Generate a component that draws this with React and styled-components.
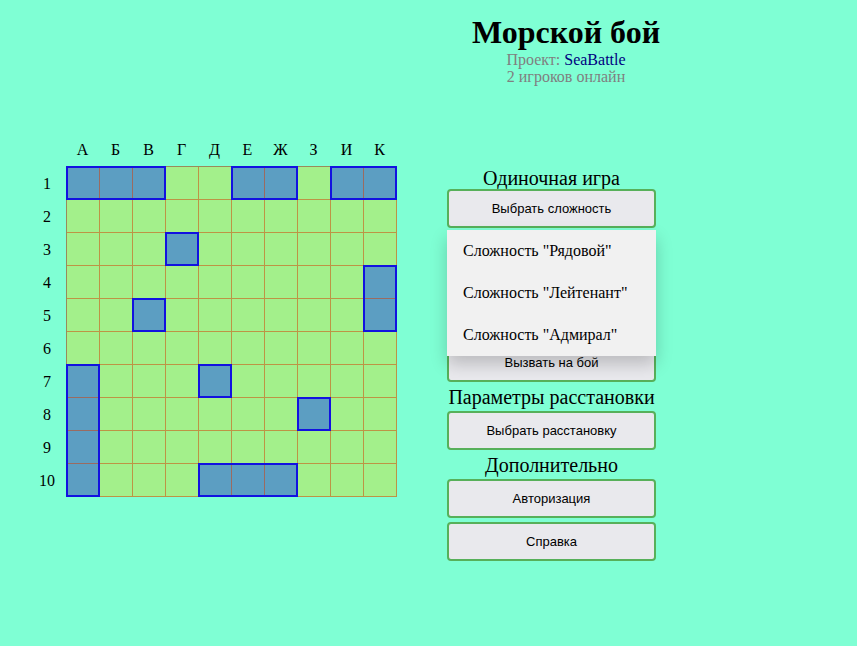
import React from 'react';
import styled, { createGlobalStyle } from 'styled-components';

const GlobalStyle = createGlobalStyle`
  body {
    margin: 0;
    background: #7fffd4;
    font-family: "Liberation Serif", "Times New Roman", serif;
  }
`;

const Page = styled.div`
  width: 857px;
  min-height: 646px;
`;

const Header = styled.header`
  padding: 14px 0 0 275px;
  text-align: center;
`;

const Title = styled.h1`
  margin: 0;
  font-size: 32px;
  line-height: 37px;
  font-weight: bold;
  color: #000;
`;

const SubLine = styled.p`
  margin: 0;
  font-size: 16px;
  line-height: 17px;
  color: #808080;
`;

const ProjectName = styled.span`
  color: #000080;
`;

const Main = styled.main`
  display: flex;
  align-items: flex-start;
  padding-left: 30px;
`;

const Board = styled.div`
  margin-top: 48px;
  display: flex;
  flex-direction: column;
`;

const ColLabels = styled.div`
  display: flex;
  margin-left: 36px;
`;

const Label = styled.div`
  width: 33px;
  height: 33px;
  display: flex;
  align-items: center;
  justify-content: center;
  font-size: 16px;
  color: #000;
`;

const BoardBody = styled.div`
  display: flex;
`;

const RowLabels = styled.div`
  width: 36px;
  display: flex;
  flex-direction: column;
  padding-top: 1px;
`;

const RowLabel = styled(Label)`
  width: 34px;
`;

const Field = styled.div`
  position: relative;
  display: grid;
  grid-template-columns: repeat(10, 33px);
  grid-template-rows: repeat(10, 33px);
  border-top: 1px solid rgba(170, 60, 10, 0.6);
  border-left: 1px solid rgba(170, 60, 10, 0.6);
`;

const Cell = styled.div`
  box-sizing: border-box;
  background: ${(p) => (p.ship ? '#5c9ec2' : '#a3f08b')};
  border-right: 1px solid rgba(215, 55, 0, 0.5);
  border-bottom: 1px solid rgba(215, 55, 0, 0.5);
`;

const Ship = styled.div`
  position: absolute;
  box-sizing: border-box;
  border: 2px solid #1212e0;
  pointer-events: none;
`;

const Panel = styled.aside`
  margin: 74px 0 0 50px;
  width: 209px;
  display: flex;
  flex-direction: column;
`;

const SectionTitle = styled.h3`
  margin: 0;
  padding: ${(p) => (p.first ? '8px 0 0' : '4px 0 3px')};
  font-size: 20px;
  line-height: 22px;
  font-weight: normal;
  text-align: center;
  color: #000;
`;

const ButtonGroup = styled.div`
  display: flex;
  flex-direction: column;
  gap: 4px;
`;

const Button = styled.button`
  box-sizing: border-box;
  width: 100%;
  height: 39px;
  background: #e9e9ed;
  border: 2px solid #57b05a;
  border-radius: 4px;
  font-family: "Liberation Sans", Arial, sans-serif;
  font-size: 13px;
  color: #000;
  cursor: pointer;
`;

const Dropdown = styled.div`
  position: relative;
`;

const Menu = styled.div`
  position: absolute;
  top: 100%;
  left: 0;
  width: 100%;
  margin-top: 2px;
  z-index: 2;
  background: #f1f1f1;
  box-shadow: 0 8px 16px rgba(0, 0, 0, 0.2);
`;

const MenuItem = styled.a`
  display: block;
  padding: 12px 16px;
  font-size: 16px;
  line-height: 18px;
  color: #000;
  text-decoration: none;
`;

const COLS = ['А', 'Б', 'В', 'Г', 'Д', 'Е', 'Ж', 'З', 'И', 'К'];

// [row, col, length, vertical]
const SHIPS = [
  [0, 0, 3, false],
  [0, 5, 2, false],
  [0, 8, 2, false],
  [2, 3, 1, false],
  [3, 9, 2, true],
  [4, 2, 1, false],
  [6, 0, 4, true],
  [6, 4, 1, false],
  [7, 7, 1, false],
  [9, 4, 3, false],
];

const shipCells = new Set();
SHIPS.forEach(([r, c, len, vert]) => {
  for (let i = 0; i < len; i++) {
    shipCells.add(vert ? `${r + i}-${c}` : `${r}-${c + i}`);
  }
});

const CELL = 33;

export default function App() {
  return (
    <Page>
      <GlobalStyle />
      <Header>
        <Title>Морской бой</Title>
        <SubLine>
          Проект: <ProjectName>SeaBattle</ProjectName>
        </SubLine>
        <SubLine>2 игроков онлайн</SubLine>
      </Header>
      <Main>
        <Board>
          <ColLabels>
            {COLS.map((c) => (
              <Label key={c}>{c}</Label>
            ))}
          </ColLabels>
          <BoardBody>
            <RowLabels>
              {COLS.map((_, i) => (
                <RowLabel key={i}>{i + 1}</RowLabel>
              ))}
            </RowLabels>
            <Field>
              {Array.from({ length: 100 }, (_, i) => {
                const r = Math.floor(i / 10);
                const c = i % 10;
                return <Cell key={i} ship={shipCells.has(`${r}-${c}`)} />;
              })}
              {SHIPS.map(([r, c, len, vert], i) => (
                <Ship
                  key={i}
                  style={{
                    left: c * CELL - 1,
                    top: r * CELL - 1,
                    width: (vert ? 1 : len) * CELL + 1,
                    height: (vert ? len : 1) * CELL + 1,
                  }}
                />
              ))}
            </Field>
          </BoardBody>
        </Board>
        <Panel>
          <SectionTitle first>Одиночная игра</SectionTitle>
          <ButtonGroup>
            <Dropdown>
              <Button>Выбрать сложность</Button>
              <Menu>
                <MenuItem href="#">Сложность "Рядовой"</MenuItem>
                <MenuItem href="#">Сложность "Лейтенант"</MenuItem>
                <MenuItem href="#">Сложность "Адмирал"</MenuItem>
              </Menu>
            </Dropdown>
            <Button>Играть с компьютером</Button>
            <Button>Начать игру</Button>
          </ButtonGroup>
          <SectionTitle>Сетевая игра</SectionTitle>
          <ButtonGroup>
            <Button>Вызвать на бой</Button>
          </ButtonGroup>
          <SectionTitle>Параметры расстановки</SectionTitle>
          <ButtonGroup>
            <Button>Выбрать расстановку</Button>
          </ButtonGroup>
          <SectionTitle>Дополнительно</SectionTitle>
          <ButtonGroup>
            <Button>Авторизация</Button>
            <Button>Справка</Button>
          </ButtonGroup>
        </Panel>
      </Main>
    </Page>
  );
}
